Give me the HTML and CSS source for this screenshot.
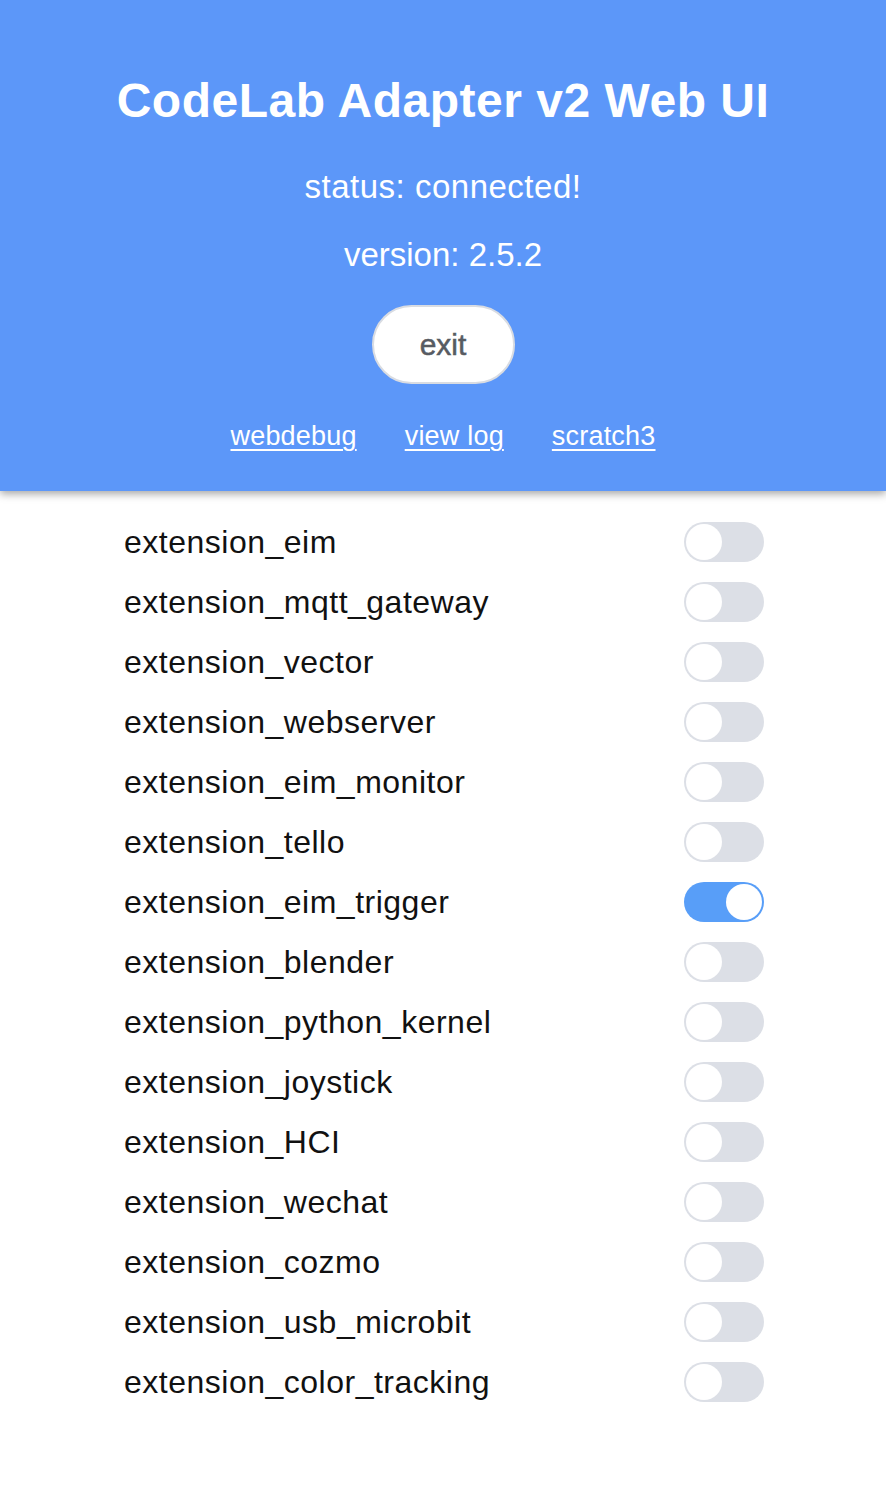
FILE: index.html
```html
<!DOCTYPE html>
<html>
<head>
<meta charset="utf-8">
<link rel="stylesheet" href="styles.css">
</head>
<body>
<header class="header">
  <h1 class="title">CodeLab Adapter v2 Web UI</h1>
  <p class="status">status: connected!</p>
  <p class="version">version: 2.5.2</p>
  <button class="exit">exit</button>
  <nav class="links">
    <a href="#">webdebug</a>
    <a href="#">view log</a>
    <a href="#">scratch3</a>
  </nav>
</header>
<main class="list">
  <div class="row"><span class="name">extension_eim</span><span class="switch"></span></div>
  <div class="row"><span class="name">extension_mqtt_gateway</span><span class="switch"></span></div>
  <div class="row"><span class="name">extension_vector</span><span class="switch"></span></div>
  <div class="row"><span class="name">extension_webserver</span><span class="switch"></span></div>
  <div class="row"><span class="name">extension_eim_monitor</span><span class="switch"></span></div>
  <div class="row"><span class="name">extension_tello</span><span class="switch"></span></div>
  <div class="row"><span class="name">extension_eim_trigger</span><span class="switch on"></span></div>
  <div class="row"><span class="name">extension_blender</span><span class="switch"></span></div>
  <div class="row"><span class="name">extension_python_kernel</span><span class="switch"></span></div>
  <div class="row"><span class="name">extension_joystick</span><span class="switch"></span></div>
  <div class="row"><span class="name">extension_HCI</span><span class="switch"></span></div>
  <div class="row"><span class="name">extension_wechat</span><span class="switch"></span></div>
  <div class="row"><span class="name">extension_cozmo</span><span class="switch"></span></div>
  <div class="row"><span class="name">extension_usb_microbit</span><span class="switch"></span></div>
  <div class="row"><span class="name">extension_color_tracking</span><span class="switch"></span></div>
</main>
</body>
</html>
```
FILE: styles.css
```css
* { box-sizing: border-box; }
html, body { margin: 0; padding: 0; background: #fff; }
body { font-family: "Liberation Sans", Arial, sans-serif; width: 886px; }

.header {
  background: #5c97f9;
  height: 491px;
  display: flex;
  flex-direction: column;
  align-items: center;
  color: #fff;
  box-shadow: 0 3px 8px rgba(0,0,0,0.35);
  padding-top: 73px;
}
.title {
  margin: 0;
  font-size: 48px;
  font-weight: bold;
  line-height: 56px;
  letter-spacing: 0.5px;
}
.status {
  margin: 40px 0 0;
  font-size: 33px;
  line-height: 36px;
  letter-spacing: 0.5px;
}
.version {
  margin: 32px 0 0;
  font-size: 33px;
  line-height: 36px;
}
.exit {
  margin-top: 32px;
  width: 143px;
  height: 79px;
  border-radius: 40px;
  border: 2px solid #d9dce2;
  background: #fff;
  color: #575b62;
  font-family: "Liberation Sans", Arial, sans-serif;
  font-size: 30px;
  -webkit-text-stroke: 0.5px #575b62;
  padding: 0;
}
.links {
  margin-top: 37px;
  display: flex;
  gap: 48px;
}
.links a {
  color: #fff;
  font-size: 27px;
  line-height: 30px;
  letter-spacing: 0.2px;
  text-decoration: underline;
  text-underline-offset: 4px;
  text-decoration-thickness: 2px;
}

.list {
  padding: 31px 122px 0 124px;
  display: flex;
  flex-direction: column;
}
.row {
  height: 60px;
  display: flex;
  align-items: flex-start;
  justify-content: space-between;
}
.name {
  font-size: 32px;
  line-height: 40px;
  letter-spacing: 0.5px;
  color: #111;
}
.switch {
  position: relative;
  width: 80px;
  height: 40px;
  border-radius: 20px;
  background: #dcdfe6;
}
.switch::after {
  content: "";
  position: absolute;
  left: 2px;
  top: 2px;
  width: 36px;
  height: 36px;
  border-radius: 50%;
  background: #fff;
}
.switch.on { background: #589ef8; }
.switch.on::after { left: 42px; }
```
